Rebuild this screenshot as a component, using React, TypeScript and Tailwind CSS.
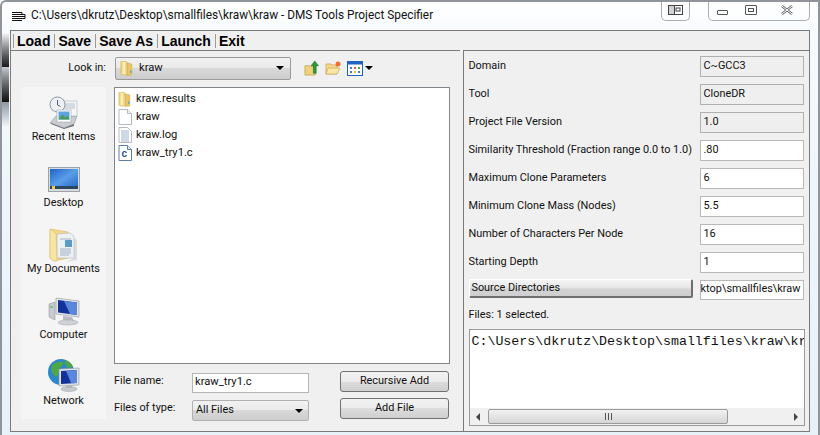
const ui = "font-['Roboto',sans-serif] text-[10.9px] text-[#111]";

function FolderIcon({ className }: { className?: string }) {
	return (
		<svg viewBox="0 0 16 18" className={className}>
			<path d="M1 1.5h6l1.5 1.5v14H2.5L1 15.5z" fill="#f0d27a" stroke="#d3ae55" strokeWidth="0.6" />
			<path d="M8.5 3l5 1.5v12.5l-5 0.5z" fill="#e9c565" stroke="#c9a64f" strokeWidth="0.5" />
			<path d="M3 2h3v14H3z" fill="#fbeeb8" />
			<rect x="11.5" y="12" width="1.5" height="2.5" fill="#4a9fd8" />
		</svg>
	);
}

function BlankFile() {
	return (
		<svg viewBox="0 0 14 16" className="w-[14px] h-[16px]">
			<path d="M1 0.5h8.5l4 4v11H1z" fill="#fff" stroke="#b5b9c0" />
			<path d="M9.5 0.5v4h4" fill="#eef0f3" stroke="#b5b9c0" />
		</svg>
	);
}

function LogFile() {
	return (
		<svg viewBox="0 0 14 16" className="w-[14px] h-[16px]">
			<path d="M1 0.5h8.5l4 4v11H1z" fill="#fff" stroke="#b5b9c0" />
			<path d="M3 4h8M3 6h8M3 8h8M3 10h8M3 12h8M3 14h8" stroke="#9fb3cc" strokeWidth="1" />
		</svg>
	);
}

function CFile() {
	return (
		<svg viewBox="0 0 14 16" className="w-[14px] h-[16px]">
			<path d="M1 0.5h8.5l4 4v11H1z" fill="#fff" stroke="#5f7fa8" />
			<path d="M9.5 0.5v4h4" fill="#dfe8f3" stroke="#5f7fa8" />
			<text x="3.5" y="12" fontSize="10" fontWeight="700" fontFamily="Liberation Sans" fill="#1f4f8f">c</text>
		</svg>
	);
}

function RecentIcon() {
	return (
		<svg viewBox="0 0 32 34" className="w-[32px] h-[34px] translate-y-[2px]">
			<path d="M2 27l6-7h21l-3 8-10 4z" fill="#c9cdd2" stroke="#8f959c" strokeWidth="0.6" />
			<rect x="12" y="5" width="17" height="15" fill="#f4f6f8" stroke="#a9afb6" strokeWidth="0.6" />
			<path d="M16 8h11M16 10h11M16 12h11" stroke="#a7b4c2" strokeWidth="0.8" />
			<circle cx="9.5" cy="8.5" r="7.5" fill="#eef2f6" stroke="#8d969f" />
			<path d="M9.5 4v5l3 1.5" stroke="#56616c" fill="none" />
			<rect x="9" y="14" width="14" height="12" fill="#fff" stroke="#9da4ab" strokeWidth="0.6" />
			<rect x="10.5" y="15.5" width="11" height="8" fill="#5aa5de" />
			<path d="M10.5 23.5l4-5 3 3 2-2 2 4z" fill="#4c9a53" />
			<path d="M3 27l13 5 10-4v2l-10 3-13-5z" fill="#6e747b" />
		</svg>
	);
}

function DesktopIcon() {
	return (
		<svg viewBox="0 0 32 25" className="w-[32px] h-[25px] -translate-y-[2px]">
			<defs>
				<linearGradient id="desk" x1="0" y1="0" x2="1" y2="1">
					<stop offset="0" stopColor="#1f63c4" />
					<stop offset="0.5" stopColor="#5a9de8" />
					<stop offset="1" stopColor="#2269c8" />
				</linearGradient>
			</defs>
			<rect x="0.5" y="0.5" width="31" height="24" fill="#d6dbe0" stroke="#9aa2aa" />
			<rect x="2" y="2" width="28" height="19" fill="url(#desk)" />
			<rect x="2" y="19" width="28" height="3" fill="#2c4660" />
			<rect x="4" y="19" width="3" height="3" fill="#f2c94c" />
		</svg>
	);
}

function DocumentsIcon() {
	return (
		<svg viewBox="0 0 32 34" className="w-[32px] h-[34px] translate-y-[2px]">
			<path d="M2 1l18 3v26l-14 3-4-3z" fill="#f3d98a" stroke="#d9b65e" strokeWidth="0.6" />
			<path d="M9 6l13-1 4 3v22H9z" fill="#eef1f4" stroke="#a8adb3" strokeWidth="0.5" />
			<path d="M12 11h11M12 21h11M12 23h11M12 25h11M12 27h9" stroke="#8fa3b8" strokeWidth="0.8" />
			<rect x="17" y="12" width="7" height="7" fill="#5c9cc9" />
			<path d="M2 1l6 4 1 28-3 0-4-3z" fill="#f7e5a3" stroke="#d9b65e" strokeWidth="0.5" />
			<path d="M26 10l3 2v20l-11 2 8-4z" fill="#bfc3c7" opacity="0.5" />
		</svg>
	);
}

function ComputerIcon() {
	return (
		<svg viewBox="0 0 32 30" className="w-[32px] h-[30px]">
			<path d="M1 8l6-2v18l-6-3z" fill="#c8ccd0" stroke="#878d93" strokeWidth="0.5" />
			<rect x="2.5" y="10" width="2" height="2" fill="#5fc04f" />
			<path d="M8 2l23 3v16l-23-3z" fill="#e4e7ea" stroke="#8f959b" strokeWidth="0.6" />
			<path d="M10 4l19 2.5v12.5l-19-2.5z" fill="#12329a" />
			<path d="M16 5l13 1.5v12.5l-7-1z" fill="#5a86dc" />
			<path d="M15 20l9 1 2 4-11-1z" fill="#b9bdc2" />
			<ellipse cx="20" cy="26.5" rx="10" ry="2.5" fill="#cfd3d7" stroke="#9aa0a6" strokeWidth="0.5" />
		</svg>
	);
}

function NetworkIcon() {
	return (
		<svg viewBox="0 0 32 33" className="w-[32px] h-[33px]">
			<circle cx="13" cy="13" r="13" fill="#2f86c9" />
			<path d="M4 6c4-3 8-4 11-3 1 3-2 5-4 6 1 4-1 7-3 9-3-2-6-7-4-12zM17 1c4 1 7 4 8 7l-5 1-3-4z" fill="#4ea843" />
			<path d="M14 22l4-3 2 4-3 3z" fill="#4ea843" />
			<path d="M11 10l20-1v17l-20 1z" fill="#dfe3e6" stroke="#8f959b" strokeWidth="0.6" />
			<path d="M13 12l16-1v13l-16 1z" fill="#12329a" />
			<path d="M18 11.7l11-0.7v13l-6 0.3z" fill="#5a86dc" />
			<ellipse cx="21" cy="30" rx="8" ry="2.5" fill="#c6cacd" stroke="#999fa5" strokeWidth="0.5" />
			<rect x="18" y="26" width="6" height="3" fill="#b3b7bb" />
		</svg>
	);
}

function Caret() {
	return <span className="w-0 h-0 border-x-[4px] border-x-transparent border-t-[4px] border-t-black" />;
}

function Sidebar() {
	const items = [
		{ label: "Recent Items", icon: <RecentIcon /> },
		{ label: "Desktop", icon: <DesktopIcon /> },
		{ label: "My Documents", icon: <DocumentsIcon /> },
		{ label: "Computer", icon: <ComputerIcon /> },
		{ label: "Network", icon: <NetworkIcon /> },
	];
	return (
		<div className="w-[85px] h-[332px] bg-[#f5f5f5] flex flex-col pt-[6px]">
			{items.map((item) => (
				<div key={item.label} className="h-[66px] shrink-0 flex flex-col items-center">
					<div className="h-[35px] flex items-end justify-center">{item.icon}</div>
					<span className="leading-[16px] mt-[1px] whitespace-nowrap">{item.label}</span>
				</div>
			))}
		</div>
	);
}

function FileRow({ icon, name }: { icon: React.ReactNode; name: string }) {
	return (
		<div className="h-[18px] flex items-center pl-[2px]">
			<span className="w-[16px] flex justify-center">{icon}</span>
			<span className="ml-[3px] text-[11.2px]">{name}</span>
		</div>
	);
}

function FileList() {
	return (
		<div className="w-[336px] h-[277px] bg-white border border-[#82878c] pt-[2px]">
			<FileRow icon={<FolderIcon className="w-[14px] h-[16px]" />} name="kraw.results" />
			<FileRow icon={<BlankFile />} name="kraw" />
			<FileRow icon={<LogFile />} name="kraw.log" />
			<FileRow icon={<CFile />} name="kraw_try1.c" />
		</div>
	);
}

function Button({ label }: { label: string }) {
	return (
		<div className="w-[109px] h-[21px] rounded-[3px] border border-[#707070] bg-[linear-gradient(#f2f2f2_0%,#ebebeb_50%,#dddddd_50%,#cfcfcf_100%)] flex items-center justify-center">
			{label}
		</div>
	);
}

function LeftPanel() {
	return (
		<div className="w-[450px] border-t border-[#7a7a7a] flex flex-col">
			<div className="h-[36px] flex items-center pb-[2px]">
				<span className="w-[95px] text-right">Look in:</span>
				<div className="ml-[9px] w-[176px] h-[23px] rounded-[2px] border border-[#9a9a9a] bg-[linear-gradient(#f2f2f2_0%,#ebebeb_45%,#d9d9d9_50%,#cdcdcd_100%)] flex items-center pl-[4px] pr-[6px]">
					<FolderIcon className="w-[14px] h-[16px]" />
					<span className="ml-[5px] flex-1 text-[11.2px]">kraw</span>
					<Caret />
				</div>
				<div className="ml-[13px] flex items-center gap-[6px]">
					<svg viewBox="0 0 16 18" className="w-[15px] h-[17px]">
						<path d="M1 6h5l1 1h5v9H1z" fill="#efd27c" stroke="#b79a3f" strokeWidth="0.7" />
						<path d="M10 14V6H7.5L11.5 1l4 5H13v8z" fill="#2f9a35" stroke="#1b6d22" strokeWidth="0.6" />
					</svg>
					<svg viewBox="0 0 16 14" className="w-[16px] h-[14px]">
						<path d="M1 3h5l1 1h5v9H1z" fill="#f3d98a" stroke="#c0a14a" strokeWidth="0.7" />
						<path d="M1 13l2-6h12l-3 6z" fill="#f9e7a6" stroke="#c0a14a" strokeWidth="0.6" />
						<circle cx="13" cy="3" r="2.5" fill="#ee6b3a" />
					</svg>
					<div className="flex items-center gap-[2px]">
						<svg viewBox="0 0 16 15" className="w-[16px] h-[15px]">
							<rect x="0.5" y="0.5" width="15" height="14" fill="#fff" stroke="#1f63c4" />
							<rect x="0.5" y="0.5" width="15" height="3" fill="#1f63c4" />
							<path d="M3 6h2v2H3zM3 10h2v2H3z" fill="#3c7fd0" />
							<path d="M7 6h2v2H7z" fill="#e2574c" />
							<path d="M7 10h2v2H7z" fill="#e8b93a" />
							<path d="M11 6h2v2h-2z" fill="#4ea843" />
							<path d="M11 10h2v2h-2z" fill="#3c7fd0" />
						</svg>
						<Caret />
					</div>
				</div>
			</div>
			<div className="flex pl-[10px]">
				<Sidebar />
				<div className="ml-[8px] flex flex-col">
					<FileList />
					<div className="mt-[7px] flex justify-between">
						<div className="flex flex-col pt-[1px]">
							<div className="h-[21px] flex items-center">
								<span className="w-[78px] -mt-[2px]">File name:</span>
								<div className="w-[117px] h-[20px] bg-white border border-[#b5b5b5] flex items-center pl-[2px] text-[11.2px]">kraw_try1.c</div>
							</div>
							<div className="mt-[7px] h-[21px] flex items-center">
								<span className="w-[78px] -mt-[5px]">Files of type:</span>
								<div className="w-[117px] h-[21px] rounded-[2px] border border-[#b0b0b0] bg-[linear-gradient(#f2f2f2_0%,#ebebeb_45%,#d9d9d9_50%,#cdcdcd_100%)] flex items-center pl-[3px] pr-[5px] justify-between">
									<span>All Files</span>
									<Caret />
								</div>
							</div>
						</div>
						<div className="flex flex-col gap-[6px] mr-[1px]">
							<Button label="Recursive Add" />
							<Button label="Add File" />
						</div>
					</div>
				</div>
			</div>
		</div>
	);
}

const fields = [
	{ label: "Domain", value: "C~GCC3", readOnly: true },
	{ label: "Tool", value: "CloneDR", readOnly: true },
	{ label: "Project File Version", value: "1.0", readOnly: true },
	{ label: "Similarity Threshold (Fraction range 0.0 to 1.0)", value: ".80", readOnly: false },
	{ label: "Maximum Clone Parameters", value: "6", readOnly: false },
	{ label: "Minimum Clone Mass (Nodes)", value: "5.5", readOnly: false },
	{ label: "Number of Characters Per Node", value: "16", readOnly: false },
	{ label: "Starting Depth", value: "1", readOnly: false },
];

function RightPanel() {
	return (
		<div className="ml-[3px] w-[346px] h-[381px] border-t border-l border-[#7a7a7a] flex flex-col pt-[1px] pl-[4px]">
			{fields.map((f) => (
				<div key={f.label} className="h-[28px] flex items-center">
					<span className="w-[232px] whitespace-nowrap">{f.label}</span>
					<div className={f.readOnly ? "w-[104px] h-[21px] border border-[#b0b0b0] bg-[#efefef] flex items-center pl-[2px]" : "w-[104px] h-[21px] border border-[#b8b8b8] bg-white flex items-center pl-[2px]"}>
						{f.value}
					</div>
				</div>
			))}
			<div className="mt-[2px] h-[21px] flex items-center">
				<div className="ml-[1px] w-[224px] h-[19px] rounded-[2px] border-t border-l border-t-white border-l-white border-b-2 border-r-2 border-b-[#6f6f6f] border-r-[#6f6f6f] bg-[linear-gradient(#f4f4f4_0%,#e6e6e6_50%,#d4d4d4_55%,#cfcfcf_100%)] flex items-center pl-[1px]">
					Source Directories
				</div>
				<div className="ml-[7px] w-[104px] h-[20px] border border-[#b8b8b8] bg-white overflow-hidden flex items-center justify-end pr-[3px] translate-y-[1px]">
					<span className="whitespace-nowrap shrink-0">C:\Users\dkrutz\Desktop\smallfiles\kraw</span>
				</div>
			</div>
			<div className="mt-[7px] h-[18px] flex items-center">Files: 1 selected.</div>
			<div className="mt-[5px] ml-[1px] w-[336px] h-[97px] bg-white border border-[#9a9a9a] flex flex-col">
				<div className="flex-1 overflow-hidden pt-[4px] pl-[1px] font-['Liberation_Mono',monospace] text-[13.3px] leading-[16px] whitespace-nowrap">
					C:\Users\dkrutz\Desktop\smallfiles\kraw\kraw_try1.c
				</div>
				<div className="h-[17px] bg-[#f0f0f0] flex items-center">
					<span className="ml-[6px] w-0 h-0 border-y-[4px] border-y-transparent border-r-[4px] border-r-[#444]" />
					<div className="ml-[8px] w-[240px] h-[15px] rounded-[2px] border border-[#9a9a9a] bg-[linear-gradient(#f2f2f2,#d6d6d6)] flex items-center justify-center">
						<span className="w-[7px] h-[7px] border-x border-[#555] flex justify-center">
							<span className="w-px h-full bg-[#555]" />
						</span>
					</div>
					<span className="ml-auto mr-[6px] w-0 h-0 border-y-[4px] border-y-transparent border-l-[4px] border-l-[#444]" />
				</div>
			</div>
		</div>
	);
}

function TitleBar() {
	return (
		<div className="h-[28px] flex items-start pl-[9px] pr-[8px]">
			<div className="h-[28px] flex items-center">
				<svg viewBox="0 0 15 9" className="w-[15px] h-[9px]">
					<path d="M1 .5h10M1 2.5h13M1 4.5h13M1 6.5h13M1 8.5h10M11 .5v2M14 2.5v4" fill="none" stroke="#111" strokeWidth="1" />
				</svg>
				<span className="ml-[5px] text-[#111] text-[11.85px] whitespace-nowrap">C:\Users\dkrutz\Desktop\smallfiles\kraw\kraw - DMS Tools Project Specifier</span>
			</div>
			<div className="ml-auto flex -mt-[2px]">
				<div className="w-[29px] h-[21px] rounded-b-[5px] border-x border-b border-[#a8adb3] flex items-center justify-center">
					<svg viewBox="0 0 15 10" className="w-[15px] h-[10px]">
						<rect x="0.5" y="0.5" width="14" height="9" fill="#fff" stroke="#444" />
						<rect x="0.5" y="0.5" width="6" height="9" fill="#cfd3d7" stroke="#444" />
						<rect x="8" y="3" width="4" height="3" fill="none" stroke="#444" />
					</svg>
				</div>
				<div className="ml-[18px] w-[102px] h-[21px] rounded-b-[5px] border-x border-b border-[#a8adb3] flex items-center">
					<div className="w-[28px] flex justify-center border-r border-transparent">
						<span className="mt-[5px] w-[11px] h-[5px] border border-[#555] bg-white rounded-[1px]" />
					</div>
					<div className="w-[28px] flex justify-center">
						<span className="w-[12px] h-[10px] border border-[#555] bg-white rounded-[1px] flex items-center justify-center">
							<span className="w-[6px] h-[4px] border border-[#555]" />
						</span>
					</div>
					<div className="flex-1 flex justify-center">
						<svg viewBox="0 0 12 10" className="w-[12px] h-[10px]">
							<path d="M1 1l10 8M11 1L1 9" stroke="#666" strokeWidth="2.4" />
							<path d="M1 1l10 8M11 1L1 9" stroke="#fff" strokeWidth="1" />
						</svg>
					</div>
				</div>
			</div>
		</div>
	);
}

export default function App() {
	const menu = ["Load", "Save", "Save As", "Launch", "Exit"];
	return (
		<div className={`relative w-[820px] h-[435px] overflow-hidden rounded-tl-[6px] border-t-2 border-x-2 border-[#8f959b] bg-[linear-gradient(#ffffff_0%,#f4f9fd_10%,#e6f1f8_100%)] ${ui}`}>
			<div className="absolute left-0 top-[30px] w-[7px] h-[35px] bg-linear-to-b from-[#ffffff] to-[#1a1a1a]" />
			<div className="absolute left-0 top-[65px] w-[7px] h-[35px] bg-linear-to-b from-[#c4cad0] to-[#111111]" />
			<div className="absolute left-0 top-[100px] w-[7px] h-[25px] bg-linear-to-b from-[#8f98a2] to-[#f2f7fb]" />
			<TitleBar />
			<div className="ml-[8px] w-[800px] h-[402px] bg-[#f0f0f0] border border-[#7a7a7a] flex flex-col">
				<div className="h-[19px] flex items-center pl-[2px] font-['Liberation_Sans',sans-serif] font-bold text-[14px] leading-none text-black">
					{menu.map((m) => (
						<span key={m} className="border-l border-[#9a9a9a] pl-[3px] pr-[4px]">{m}</span>
					))}
				</div>
				<div className="flex">
					<LeftPanel />
					<RightPanel />
				</div>
			</div>
		</div>
	);
}
